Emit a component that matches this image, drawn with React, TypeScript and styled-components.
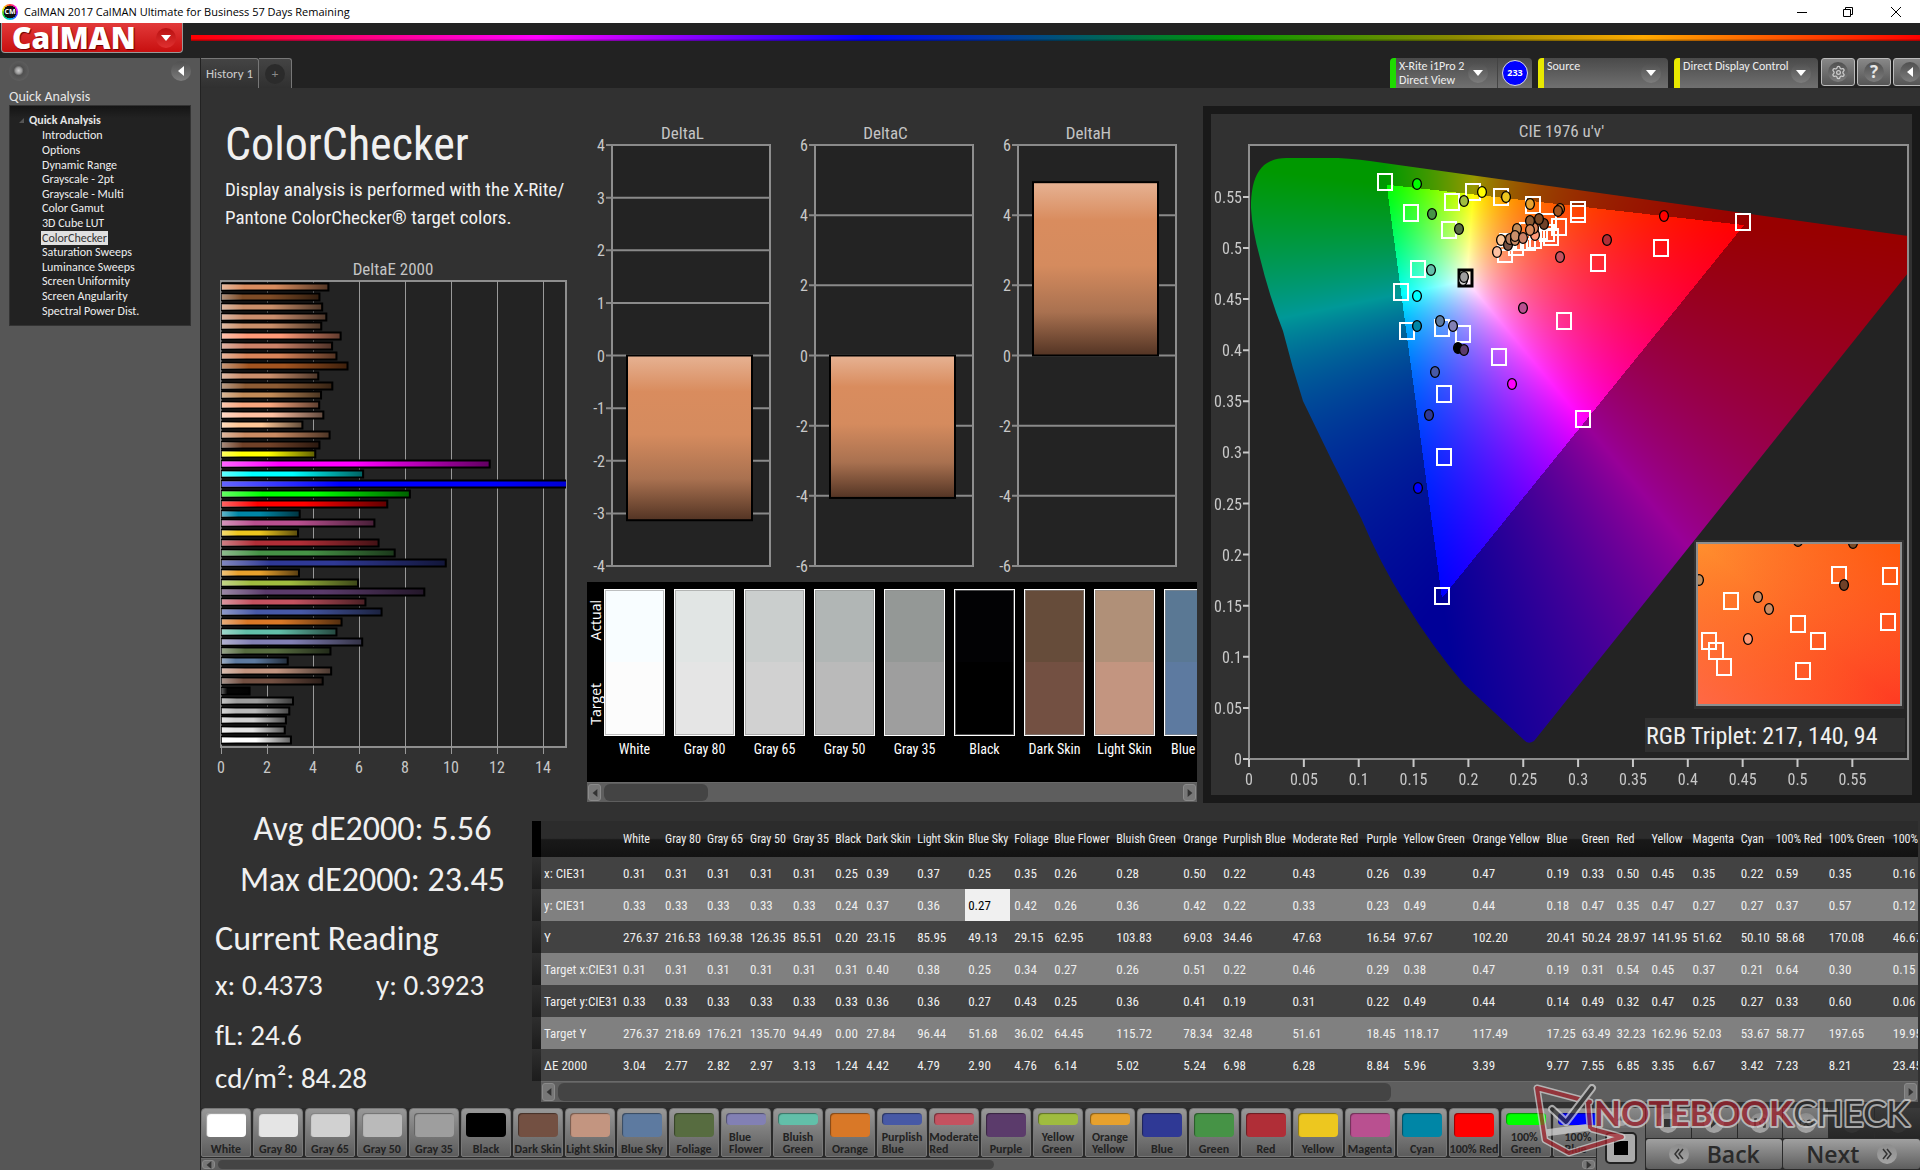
import React, { useEffect, useRef } from 'react';
import styled, { createGlobalStyle, css } from 'styled-components';
import { Settings } from 'lucide-react';

/* ---------- data ---------- */

type Patch = { name: string; color: string };

const patches: Patch[] = [
  { name: 'White', color: '#ffffff' },
  { name: 'Gray 80', color: '#e5e5e5' },
  { name: 'Gray 65', color: '#d1d1d1' },
  { name: 'Gray 50', color: '#bababa' },
  { name: 'Gray 35', color: '#9e9e9e' },
  { name: 'Black', color: '#000000' },
  { name: 'Dark Skin', color: '#735042' },
  { name: 'Light Skin', color: '#c39580' },
  { name: 'Blue Sky', color: '#5d7aa0' },
  { name: 'Foliage', color: '#576c40' },
  { name: 'Blue Flower', color: '#8280b4' },
  { name: 'Bluish Green', color: '#62bfa9' },
  { name: 'Orange', color: '#d97827' },
  { name: 'Purplish Blue', color: '#4759a6' },
  { name: 'Moderate Red', color: '#c45260' },
  { name: 'Purple', color: '#5b3b6b' },
  { name: 'Yellow Green', color: '#9fbc3f' },
  { name: 'Orange Yellow', color: '#e7a12d' },
  { name: 'Blue', color: '#2f3995' },
  { name: 'Green', color: '#469346' },
  { name: 'Red', color: '#b02e37' },
  { name: 'Yellow', color: '#edc71f' },
  { name: 'Magenta', color: '#b95090' },
  { name: 'Cyan', color: '#0086a6' },
  { name: '100% Red', color: '#ff0000' },
  { name: '100% Green', color: '#00ff00' },
  { name: '100% Blue', color: '#0000ff' },
];

const stripPatches = [
  { name: 'White', actual: '#f8fdff', target: '#fcfcfc' },
  { name: 'Gray 80', actual: '#e1e5e4', target: '#e5e5e5' },
  { name: 'Gray 65', actual: '#cacecd', target: '#d1d1d1' },
  { name: 'Gray 50', actual: '#b1b6b5', target: '#bababa' },
  { name: 'Gray 35', actual: '#949896', target: '#9e9e9e' },
  { name: 'Black', actual: '#020204', target: '#000000' },
  { name: 'Dark Skin', actual: '#664c3a', target: '#735042' },
  { name: 'Light Skin', actual: '#b09078', target: '#c39580' },
  { name: 'Blue Sky', actual: '#5a7894', target: '#5d7aa0' },
];

const columnWidths = [
  42, 42, 43, 43, 42, 31, 51, 51, 46, 40, 62, 67, 40, 69, 74, 37, 69, 74, 35, 35, 35, 41, 48, 35, 53, 64, 50,
];

const rows: { label: string; values: string[] }[] = [
  { label: 'x: CIE31', values: '0.31 0.31 0.31 0.31 0.31 0.25 0.39 0.37 0.25 0.35 0.26 0.28 0.50 0.22 0.43 0.26 0.39 0.47 0.19 0.33 0.50 0.45 0.35 0.22 0.59 0.35 0.16'.split(' ') },
  { label: 'y: CIE31', values: '0.33 0.33 0.33 0.33 0.33 0.24 0.37 0.36 0.27 0.42 0.26 0.36 0.42 0.22 0.33 0.23 0.49 0.44 0.18 0.47 0.35 0.47 0.27 0.27 0.37 0.57 0.12'.split(' ') },
  { label: 'Y', values: '276.37 216.53 169.38 126.35 85.51 0.20 23.15 85.95 49.13 29.15 62.95 103.83 69.03 34.46 47.63 16.54 97.67 102.20 20.41 50.24 28.97 141.95 51.62 50.10 58.68 170.08 46.67'.split(' ') },
  { label: 'Target x:CIE31', values: '0.31 0.31 0.31 0.31 0.31 0.31 0.40 0.38 0.25 0.34 0.27 0.26 0.51 0.22 0.46 0.29 0.38 0.47 0.19 0.31 0.54 0.45 0.37 0.21 0.64 0.30 0.15'.split(' ') },
  { label: 'Target y:CIE31', values: '0.33 0.33 0.33 0.33 0.33 0.33 0.36 0.36 0.27 0.43 0.25 0.36 0.41 0.19 0.31 0.22 0.49 0.44 0.14 0.49 0.32 0.47 0.25 0.27 0.33 0.60 0.06'.split(' ') },
  { label: 'Target Y', values: '276.37 218.69 176.21 135.70 94.49 0.00 27.84 96.44 51.68 36.02 64.45 115.72 78.34 32.48 51.61 18.45 118.17 117.49 17.25 63.49 32.23 162.96 52.03 53.67 58.77 197.65 19.95'.split(' ') },
  { label: 'ΔE 2000', values: '3.04 2.77 2.82 2.97 3.13 1.24 4.42 4.79 2.90 4.76 6.14 5.02 5.24 6.98 6.28 8.84 5.96 3.39 9.77 7.55 6.85 3.35 6.67 3.42 7.23 8.21 23.45'.split(' ') },
];

const deltaE: [number, string][] = [
  [4.67, '#d98c5e'], [4.28, '#7d4b26'], [4.4, '#c98e69'], [4.58, '#ca8d6c'], [4.36, '#c98e69'],
  [5.2, '#ff9a78'], [4.83, '#cc8268'], [5.02, '#d98459'], [5.5, '#a25420'], [4.23, '#cb8f6c'],
  [4.84, '#8c5b34'], [4.35, '#c28b58'], [4.27, '#f8a67e'], [4.45, '#ffc1a2'], [3.54, '#ffc797'],
  [4.72, '#ca8b63'], [4.28, '#704128'], [4.1, '#ffff00'], [11.68, '#ff00ff'], [6.18, '#00ffff'],
  [23.45, '#0000ff'], [8.21, '#00ff00'], [7.23, '#ff0000'], [3.42, '#0086a6'], [6.67, '#b95090'],
  [3.35, '#edc71f'], [6.85, '#b02e37'], [7.55, '#469346'], [9.77, '#2f3995'], [3.39, '#e7a12d'],
  [5.96, '#9fbc3f'], [8.84, '#5b3b6b'], [6.28, '#c45260'], [6.98, '#4759a6'], [5.24, '#d97827'],
  [5.02, '#62bfa9'], [6.14, '#8280b4'], [4.76, '#576c40'], [2.9, '#5d7aa0'], [4.79, '#c39580'],
  [4.42, '#735042'], [1.24, '#050505'], [3.13, '#9e9e9e'], [2.97, '#bababa'], [2.82, '#d1d1d1'],
  [2.77, '#e5e5e5'], [3.04, '#ffffff'],
];

const targets: [number, number][] = [
  [136, 37], [224, 47], [252, 52], [203, 57], [162, 68], [200, 85], [284, 60], [329, 65], [329, 69],
  [310, 82], [169, 124], [152, 147], [349, 118], [412, 103], [494, 77], [315, 176], [158, 186],
  [193, 183], [214, 189], [250, 212], [195, 249], [334, 274], [195, 312], [193, 451], [300, 77],
  [302, 92], [285, 95], [279, 97], [274, 97], [267, 102], [256, 109], [258, 97], [278, 86], [291, 86],
  [298, 88],
];

const readings: [number, number, string][] = [
  [168, 39, '#00ff00'], [183, 69, '#469346'], [210, 84, '#576c40'], [215, 56, '#9fbc3f'],
  [233, 47, '#ffff00'], [257, 52, '#edc71f'], [281, 59, '#e7a12d'], [182, 125, '#62bfa9'],
  [168, 151, '#00ffff'], [168, 181, '#0086a6'], [191, 176, '#5d7aa0'], [204, 181, '#8280b4'],
  [209, 203, '#000000'], [215, 205, '#5b3b6b'], [186, 227, '#4759a6'], [180, 270, '#2f3995'],
  [263, 239, '#ff00ff'], [274, 163, '#b95090'], [311, 112, '#c45260'], [358, 95, '#b02e37'],
  [415, 71, '#ff0000'], [214, 135, '#d1d1d1'], [215, 132, '#9e9e9e'], [169, 343, '#0000ff'],
  [248, 107, '#ffc1a2'], [252, 95, '#ffc797'], [259, 100, '#735042'], [261, 94, '#b57d5c'],
  [266, 95, '#ca8b63'], [268, 84, '#c28b58'], [266, 91, '#c98e69'], [274, 93, '#cc8268'],
  [286, 90, '#ff9a78'], [285, 83, '#d98459'], [281, 76, '#8c5b34'], [281, 85, '#d98c5e'],
  [295, 79, '#704128'], [290, 74, '#7d4b26'], [311, 64, '#d97827'], [309, 66, '#a25420'],
];

const insetTargets: [number, number][] = [
  [142, 32], [193, 33], [34, 58], [191, 79], [101, 81], [121, 98], [12, 98], [19, 108], [27, 124], [106, 128],
];

const insetReadings: [number, number, string][] = [
  [2, 37, '#c28b58'], [61, 54, '#ca8b63'], [72, 66, '#cc8b63'], [147, 42, '#704128'],
  [51, 96, '#ff9a78'], [101, -2, '#8c5b34'], [156, 0, '#7d4b26'],
];

const steps = [
  'Introduction', 'Options', 'Dynamic Range', 'Grayscale - 2pt', 'Grayscale - Multi', 'Color Gamut',
  '3D Cube LUT', 'ColorChecker', 'Saturation Sweeps', 'Luminance Sweeps', 'Screen Uniformity',
  'Screen Angularity', 'Spectral Power Dist.',
];

/* ---------- base ---------- */

const humanist = `Carlito, Lato, "Open Sans", sans-serif`;
const condensed = `"Roboto Condensed", Carlito, Roboto, sans-serif`;
const system = `"Open Sans", "Noto Sans", sans-serif`;

const GlobalStyle = createGlobalStyle`
  *, *::before, *::after { box-sizing: border-box; }
  body { margin: 0; background: #222; color: #e6e6e6; font: 12px/15px ${humanist}; overflow: hidden; }
  button, select, input { font: inherit; color: inherit; margin: 0; padding: 0; border: 0; background: none; }
  h1, h2, p, ul, dl, dd, figure { margin: 0; padding: 0; }
  ul { list-style: none; }
`;

const Page = styled.div`
  position: relative;
  display: flex;
  flex-direction: column;
  min-height: 100vh;
  overflow: hidden;
`;

/* ---------- window frame ---------- */

const TitleBar = styled.header`
  display: flex;
  align-items: center;
  gap: 6px;
  height: 23px;
  padding-left: 2px;
  background: #fff;
  color: #000;
  font: 11px/22px ${system};
`;

const AppBadge = styled.span`
  display: grid;
  place-items: center;
  width: 16px;
  height: 16px;
  border-radius: 50%;
  background: radial-gradient(circle, #111 0 56%, transparent 58%),
    conic-gradient(#f33, #f0f, #33f, #0cf, #0c3, #fe0, #f33);
  color: #fff;
  font: 700 7px/16px ${system};
`;

const WindowButtons = styled.div`
  display: flex;
  margin-left: auto;
`;

const WindowButton = styled.button`
  display: grid;
  place-items: center;
  width: 46px;
  height: 21px;

  &:last-child { width: 49px; }
`;

const Brand = styled.div`
  display: flex;
  align-items: flex-start;
  gap: 8px;
  height: 35px;
  padding-left: 1px;
`;

const BrandButton = styled.button`
  display: flex;
  align-items: center;
  justify-content: space-between;
  width: 182px;
  height: 30px;
  padding: 0 6px 0 10px;
  border: 1px solid #999;
  border-top: 0;
  border-radius: 0 0 4px 4px;
  background: linear-gradient(#e23a3a, #c80f0f);
  color: #fff;
  font: 800 30px/28px ${system};
  text-shadow: 1px 1px 1px #600;
`;

const Rainbow = styled.div`
  flex: 1;
  height: 6px;
  margin-top: 12px;
  background: linear-gradient(#0000 60%, #0006),
    linear-gradient(90deg, #f00, #f0f 20%, #00f 39%, #090 60%, #8a8a00 73%, #fa0 84%, #f00);
`;

const Round = styled.span<{ $size?: number; $tone?: string }>`
  display: inline-grid;
  place-items: center;
  flex: none;
  width: ${(p) => p.$size ?? 20}px;
  height: ${(p) => p.$size ?? 20}px;
  border-radius: 50%;
  background: ${(p) => p.$tone ?? 'linear-gradient(#505050, #7c7c7c)'};
`;

const Body = styled.div`
  display: flex;
  flex: 1;
`;

/* ---------- sidebar ---------- */

const Sidebar = styled.nav`
  flex: none;
  width: 201px;
  padding: 3px 9px;
  border-right: 1px solid #222;
  background: #565656;
`;

const SidebarTools = styled.div`
  display: flex;
  justify-content: space-between;
  height: 28px;
`;

const PlainButton = styled.button`
  display: grid;
  place-items: center;
  width: 20px;
  height: 20px;
`;

const SidebarTitle = styled.h2`
  font: 14px/16px ${humanist};
`;

const Tree = styled.div`
  height: 221px;
  padding: 6px 0 0 14px;
  border: 1px solid #333;
  background: linear-gradient(#151515, #222 12px);
`;

const TreeRoot = styled.div`
  display: flex;
  align-items: center;
  gap: 5px;
  height: 16px;
  margin-left: -5px;
  font-weight: 700;
`;

const TreeList = styled.ul`
  display: flex;
  flex-direction: column;
  height: 190px;
  margin-left: 17px;
`;

const TreeItem = styled.li`
  display: flex;
  flex: 1;
  align-items: center;
`;

const TreeLink = styled.a<{ $active?: boolean }>`
  padding: 0 1px;
  line-height: 14px;
  color: ${(p) => (p.$active ? '#333' : '#eee')};
  background: ${(p) => (p.$active ? '#e0e0e0' : 'none')};
  text-decoration: none;
`;

/* ---------- tab and device bar ---------- */

const Main = styled.main`
  display: flex;
  flex: 1;
  flex-direction: column;
  min-width: 0;
  background: #313131;
`;

const TopBar = styled.div`
  display: flex;
  align-items: flex-start;
  justify-content: space-between;
  height: 30px;
  background: #222;
`;

const Tabs = styled.div`
  display: flex;
`;

const Tab = styled.button<{ $width: number }>`
  width: ${(p) => p.$width}px;
  height: 30px;
  border: 1px solid #777;
  border-bottom: 0;
  border-left-width: 0;
  border-radius: 0 3px 0 0;
  background: linear-gradient(#444, #303030);
  color: #ccc;
  font-size: 13px;
`;

const TabPlus = styled(Round)`
  color: #888;
`;

const Devices = styled.div`
  display: flex;
  align-items: flex-start;
  gap: 6px;
`;

const deviceFace = css`
  height: 30px;
  border-radius: 4px 4px 0 0;
  background: linear-gradient(#4a4a4a, #707070);
  color: #eee;
`;

const Meter = styled.div`
  ${deviceFace}
  display: flex;
  align-items: center;
  width: 142px;
  border-left: 6px solid #1edc00;
`;

const MeterButton = styled.button`
  display: flex;
  align-items: center;
  justify-content: space-between;
  width: 102px;
  height: 30px;
  padding: 0 9px 0 3px;
  border-right: 1px solid #444;
  line-height: 14px;
  text-align: left;
`;

const Count = styled.span`
  display: grid;
  place-items: center;
  width: 26px;
  height: 26px;
  margin: 0 auto;
  border: 1px solid #ddd;
  border-radius: 50%;
  background: #00f;
  color: #fff;
  font: 700 9px/12px ${system};
`;

const DeviceSelect = styled.label<{ $width: number }>`
  ${deviceFace}
  display: grid;
  grid-template-columns: 1fr 27px;
  align-items: center;
  width: ${(p) => p.$width}px;
  border-left: 6px solid #e8e800;
`;

const Select = styled.select`
  grid-area: 1 / 1 / 2 / 3;
  width: 100%;
  height: 30px;
  padding: 0 0 13px 3px;
  appearance: none;
  outline: 0;
`;

const SelectArrow = styled(Round)`
  grid-area: 1 / 2;
  pointer-events: none;
`;

const SquareButtons = styled.div`
  display: flex;
  gap: 2px;
  width: 99px;
  margin-left: -3px;
  overflow: hidden;
`;

const SquareButton = styled.button`
  display: grid;
  flex: none;
  place-items: center;
  width: 34px;
  height: 28px;
  border: 1px solid #bbb;
  border-radius: 3px;
  background: linear-gradient(#888, #555);
  font: 700 17px/20px ${system};
`;

/* ---------- workspace ---------- */

const Workspace = styled.div`
  display: grid;
  grid-template-columns: 380px 622px minmax(0, 1fr);
  height: 715px;
`;

const Intro = styled.section`
  padding-top: 26px;
`;

const Title = styled.h1`
  padding-left: 24px;
  color: #f0f0f0;
  font: 400 46px/60px ${condensed};
`;

const Lead = styled.p`
  padding: 2px 0 25px 24px;
  color: #f0f0f0;
  font: 19px/28px ${condensed};
`;

const Caption = styled.figcaption`
  height: 24px;
  color: #c4c4c4;
  font: 17px/24px ${condensed};
  text-align: center;
`;

const WideCaption = styled(Caption)`
  padding-left: 4px;
`;

const Drawing = styled.svg`
  display: block;
  overflow: visible;
`;

const AxisText = styled.text`
  fill: #c8c8c8;
  font: 16px ${condensed};
`;

const Middle = styled.section`
  padding-top: 33px;
`;

const DeltaRow = styled.div`
  display: flex;
  width: 609px;
  margin-bottom: 16px;
`;

const Delta = styled.figure`
  flex: 1;
`;

const Strip = styled.div`
  width: 610px;
  margin-left: 6px;
`;

const StripBody = styled.div`
  display: flex;
  height: 200px;
  padding-top: 7px;
  background: #000;
  overflow: hidden;
`;

const StripSide = styled.div`
  display: flex;
  flex: none;
  flex-direction: column;
  justify-content: space-between;
  width: 17px;
  height: 147px;
  padding: 11px 0;
`;

const SideLabel = styled.span`
  writing-mode: vertical-rl;
  transform: rotate(180deg);
  color: #fff;
  font: 14px/17px ${system};
`;

const StripItems = styled.div`
  display: flex;
  gap: 9px;
`;

const StripItem = styled.div`
  flex: none;
  width: 61px;
  color: #fff;
  font: 14px/26px ${condensed};
  text-align: center;
  white-space: nowrap;
`;

const StripSwatch = styled.div<{ $top: string; $bottom: string }>`
  height: 147px;
  border: 1px solid #fff;
  box-shadow: inset 0 0 0 1px #8888;
  background: linear-gradient(${(p) => p.$top} 50%, ${(p) => p.$bottom} 50%);
`;

const ScrollTrack = styled.div<{ $height: number }>`
  display: flex;
  align-items: center;
  height: ${(p) => p.$height}px;
  padding: 1px;
  gap: 3px;
  border-top: 1px solid #6a6a6a;
  background: #5e5e5e;
`;

const ScrollButton = styled.button`
  display: grid;
  place-items: center;
  flex: none;
  align-self: stretch;
  width: 13px;
  border: 1px solid #8a8a8a;
  border-radius: 3px;
  background: #777;
`;

const ScrollLane = styled.div`
  display: flex;
  flex: 1;
  align-self: stretch;
`;

const ScrollThumb = styled.div<{ $percent: number }>`
  width: ${(p) => p.$percent}%;
  border-radius: 6px;
  background: #444;
`;

const CiePanel = styled.section`
  margin-top: 18px;
  border: 8px solid #191919;
`;

const CieCaption = styled(Caption)`
  height: 31px;
  line-height: 34px;
`;

const PanelText = styled.text`
  fill: #f0f0f0;
  font: 24px ${condensed};
`;

/* ---------- results ---------- */

const Results = styled.div`
  display: grid;
  grid-template-columns: 331px minmax(0, 1fr);
  height: 305px;
`;

const Stats = styled.section`
  padding-left: 14px;
  color: #f0f0f0;
`;

const BigStat = styled.p`
  padding-right: 2px;
  font: 34px/51px ${humanist};
  text-align: center;
`;

const StatTitle = styled.h2`
  padding-top: 9px;
  font: 400 34px/50px ${humanist};
`;

const StatRow = styled.p<{ $spaced?: boolean }>`
  display: grid;
  grid-template-columns: 161px 1fr;
  padding-bottom: ${(p) => (p.$spaced ? 7 : 0)}px;
  font: 29px/43px ${humanist};
`;

const TableArea = styled.section`
  display: grid;
  grid-template-columns: 9px minmax(0, 1fr);
  align-content: start;
  margin: 18px 2px 0 0;
`;

const RowHandles = styled.div`
  border-top: 36px solid #000;
  background: repeating-linear-gradient(#2e2e2e, #1c1c1c 32px);
`;

const TableClip = styled.div`
  overflow: hidden;
`;

const Table = styled.table`
  width: 1399px;
  table-layout: fixed;
  border-collapse: collapse;
  color: #eee;
  font: 13px/20px ${condensed};
  text-align: left;
  white-space: nowrap;

  thead tr { height: 36px; background: linear-gradient(#2c2c2c 48%, #191919 52%, #121212); }
  tbody tr { height: 32px; background: #424242; }
  tbody tr:nth-child(even) { background: #808080; }
  th, td { padding: 2px 0 0 3px; font-weight: 400; }
  thead th { padding-top: 0; font-size: 12px; }
`;

const EditTd = styled.td`
  && { padding: 0; }
`;

const EditCell = styled.input`
  display: block;
  width: 45px;
  height: 32px;
  padding-left: 3px;
  background: #f0f0f0;
  color: #000;
`;

const TableScroll = styled.div`
  grid-column: 2;
`;

/* ---------- bottom bar ---------- */

const BottomBar = styled.footer`
  display: grid;
  grid-template-columns: minmax(0, 1fr) 48px 274px;
  gap: 1px;
  height: 62px;
  background: #2a2a2a;
`;

const Palette = styled.div`
  min-width: 0;
`;

const PaletteItems = styled.div`
  display: flex;
  gap: 2px;
  height: 50px;
  overflow: hidden;
`;

const PaletteButton = styled.button`
  display: flex;
  flex: none;
  flex-direction: column;
  align-items: center;
  justify-content: space-between;
  width: 50px;
  height: 49px;
  padding: 4px 0 1px;
  border: 1px solid #777;
  border-radius: 4px 4px 2px 2px;
  background: linear-gradient(#989898, #5c5c5c);
  color: #222;
  font: 700 12px/12px ${humanist};
  text-align: left;
  white-space: nowrap;
`;

const PaletteSwatch = styled.span<{ $color: string; $short: boolean }>`
  width: 40px;
  height: ${(p) => (p.$short ? 12 : 24)}px;
  border-radius: 4px;
  background: ${(p) => p.$color};
  box-shadow: inset 1px 1px 1px #0006;
`;

const StopColumn = styled.div`
  display: flex;
  flex-direction: column;
  align-items: center;
  background: #666;
`;

const UpButton = styled.button`
  display: grid;
  place-items: center;
  width: 48px;
  height: 20px;
  background: linear-gradient(#8a8a8a, #6c6c6c);
`;

const PatternButton = styled.button`
  display: grid;
  place-items: center;
  width: 32px;
  height: 32px;
  margin-top: 4px;
  border: 2px solid #222;
  border-radius: 5px;
  background: #aaa;
`;

const PatternSquare = styled.span`
  width: 14px;
  height: 14px;
  background: #000;
`;

const Transport = styled.div`
  display: grid;
  grid-template-columns: repeat(6, 1fr);
  grid-template-rows: 30px 30px;
  gap: 1px;
`;

const TransportButton = styled.button<{ $off?: boolean }>`
  display: grid;
  place-items: center;
  background: ${(p) => (p.$off ? 'linear-gradient(#3a3a3a, #262626)' : 'linear-gradient(#7d7d7d, #585858)')};
`;

const StepButton = styled.button`
  display: flex;
  grid-column: span 3;
  align-items: center;
  justify-content: center;
  gap: 18px;
  border-radius: 3px;
  background: linear-gradient(#a0a0a0, #5e5e5e);
  color: #2a2a2a;
  font: 600 23px/28px ${system};
`;

const Watermark = styled.svg`
  position: absolute;
  right: 0;
  bottom: 0;
  overflow: visible;
  pointer-events: none;
`;

const WatermarkText = styled.text`
  font: 700 35px Lato, sans-serif;
  stroke: #d4d4d4;
  stroke-width: 4px;
  stroke-linejoin: round;
  paint-order: stroke;
`;

/* ---------- pieces ---------- */

type Direction = 'left' | 'right' | 'down' | 'up';

const arrowPaths: Record<Direction, string> = {
  left: 'M8 0 L2 5 L8 10 Z',
  right: 'M2 0 L8 5 L2 10 Z',
  down: 'M0 2 L10 2 L5 8 Z',
  up: 'M0 8 L10 8 L5 2 Z',
};

function Arrow({ to, size = 10, fill = '#fff' }: { to: Direction; size?: number; fill?: string }) {
  return (
    <svg width={size} height={size} viewBox="0 0 10 10" aria-hidden="true">
      <path d={arrowPaths[to]} fill={fill} />
    </svg>
  );
}

function ScrollBar({ height, percent }: { height: number; percent: number }) {
  return (
    <ScrollTrack $height={height}>
      <ScrollButton aria-label="Scroll left"><Arrow to="left" size={8} fill="#333" /></ScrollButton>
      <ScrollLane><ScrollThumb $percent={percent} /></ScrollLane>
      <ScrollButton aria-label="Scroll right"><Arrow to="right" size={8} fill="#333" /></ScrollButton>
    </ScrollTrack>
  );
}

function DeltaEChart() {
  const left = 20;
  const unit = 23;
  const width = 345;
  const height = 466;
  const pitch = 9.85;
  return (
    <figure>
      <WideCaption>DeltaE 2000</WideCaption>
      <Drawing width="380" height="500" viewBox="0 0 380 500">
        <defs>
          <linearGradient id="sheen">
            <stop offset="0" stopColor="#fff" stopOpacity=".4" />
            <stop offset=".22" stopColor="#fff" stopOpacity="0" />
            <stop offset=".5" stopColor="#000" stopOpacity="0" />
            <stop offset="1" stopColor="#000" stopOpacity=".62" />
          </linearGradient>
          <clipPath id="plotE"><rect x={left} y="0" width={width} height={height} /></clipPath>
        </defs>
        <rect x={left} y="0" width={width} height={height} fill="#232323" stroke="#8e8e8e" strokeWidth="2" />
        {[0, 2, 4, 6, 8, 10, 12, 14].map((n) => (
          <g key={n}>
            <path d={`M${left + n * unit + 0.5} 0 V${height + 7}`} stroke="#999" />
            <AxisText x={left + n * unit} y="492" textAnchor="middle">{n}</AxisText>
          </g>
        ))}
        <g clipPath="url(#plotE)">
          {deltaE.map(([value, color], i) => (
            <g key={i} stroke="#000">
              <rect x={left} y={Math.round(3 + i * pitch) - 0.5} width={value * unit} height="7" fill={color} strokeWidth="2" />
              <rect x={left} y={Math.round(3 + i * pitch) - 0.5} width={value * unit} height="7" fill="url(#sheen)" />
            </g>
          ))}
        </g>
      </Drawing>
    </figure>
  );
}

function DeltaChart({ name, range, step, value }: { name: string; range: number; step: number; value: number }) {
  const height = 421;
  const unit = height / (range * 2);
  const ticks: number[] = [];
  for (let n = range; n >= -range; n -= step) ticks.push(n);
  const top = value > 0 ? (range - value) * unit : range * unit;
  return (
    <Delta>
      <Caption>{name}</Caption>
      <Drawing width="203" height="421" viewBox="0 0 203 421">
        <defs>
          <linearGradient id="skin" x2="0" y2="1">
            <stop offset="0" stopColor="#e6b293" />
            <stop offset=".22" stopColor="#d98c5e" />
            <stop offset=".48" stopColor="#d58b5e" />
            <stop offset=".75" stopColor="#a97150" />
            <stop offset="1" stopColor="#533424" />
          </linearGradient>
        </defs>
        <rect x="31" y="0" width="158" height={height} fill="#232323" stroke="#8e8e8e" strokeWidth="2" />
        {ticks.map((n) => (
          <g key={n}>
            <path d={`M25 ${(range - n) * unit} H189`} stroke="#8a8a8a" strokeWidth="2" />
            <AxisText x="24" y={(range - n) * unit + 6} textAnchor="end">{n}</AxisText>
          </g>
        ))}
        <rect x="46" y={top} width="125" height={Math.abs(value) * unit} fill="url(#skin)" stroke="#000" strokeWidth="2" />
      </Drawing>
    </Delta>
  );
}

const PLOT_W = 659;
const PLOT_H = 614;
const locus =
  'M2 63 C2 30 12 13 38 13 L89 13 Q110 14 135 18 L659 91 V128 L285 596 Q279 600 275 595 L215 539 Q184 503 155 456 Q132 420 112 373 Q82 315 54 256 Q43 222 34 186 Q20 150 11 113 Q3 84 2 63 Z';

function ChromaticityField() {
  const ref = useRef<HTMLCanvasElement>(null);
  useEffect(() => {
    const canvas = ref.current;
    const ctx = canvas?.getContext('2d');
    if (!ctx) return;
    const image = ctx.createImageData(PLOT_W, PLOT_H);
    for (let py = 0; py < PLOT_H; py++) {
      for (let px = 0; px < PLOT_W; px++) {
        const u = px / 1097;
        const v = Math.max((PLOT_H - py) / 1022, 0.005);
        // u'v' at unit luminance to XYZ, then to linear sRGB
        const X = (9 * u) / (4 * v);
        const Z = (12 - 3 * u - 20 * v) / (4 * v);
        const r = 3.2406 * X - 1.5372 - 0.4986 * Z;
        const g = -0.9689 * X + 1.8758 + 0.0415 * Z;
        const b = 0.0557 * X - 0.204 + 1.057 * Z;
        const peak = Math.max(r, g, b, 0.0001);
        const gain = Math.min(r, g, b) < 0 ? 152 : 255;
        const i = (py * PLOT_W + px) * 4;
        image.data[i] = (Math.max(r, 0) / peak) * gain;
        image.data[i + 1] = (Math.max(g, 0) / peak) * gain;
        image.data[i + 2] = (Math.max(b, 0) / peak) * gain;
        image.data[i + 3] = 255;
      }
    }
    ctx.putImageData(image, 0, 0);
    ctx.globalCompositeOperation = 'destination-in';
    ctx.fill(new Path2D(locus));
    ctx.globalCompositeOperation = 'destination-over';
    ctx.fillStyle = '#232323';
    ctx.fillRect(0, 0, PLOT_W, PLOT_H);
    ctx.globalCompositeOperation = 'source-over';
  }, []);
  return <canvas ref={ref} width={PLOT_W} height={PLOT_H} />;
}

function Targets({ points }: { points: [number, number][] }) {
  return (
    <g fill="none" stroke="#fff" strokeWidth="2">
      {points.map(([x, y], i) => <rect key={i} x={x - 7} y={y - 8} width="14" height="16" />)}
    </g>
  );
}

function Readings({ points }: { points: [number, number, string][] }) {
  return (
    <g stroke="#000" strokeWidth="1.3">
      {points.map(([x, y, c], i) => <ellipse key={i} cx={x} cy={y} rx="4.4" ry="5.4" fill={c} />)}
    </g>
  );
}

function CieChart() {
  const ticks = [0, 0.05, 0.1, 0.15, 0.2, 0.25, 0.3, 0.35, 0.4, 0.45, 0.5, 0.55];
  return (
    <figure>
      <CieCaption>CIE 1976 u'v'</CieCaption>
      <Drawing width="100%" viewBox="0 0 701 650">
        <defs>
          <linearGradient id="insetBase" x2="1" y2="1">
            <stop offset="0" stopColor="#ff8f2e" />
            <stop offset=".5" stopColor="#ff6426" />
            <stop offset="1" stopColor="#ff3a22" />
          </linearGradient>
          <linearGradient id="insetTint" x1="1" y1="0" x2="0" y2="1">
            <stop offset="0" stopColor="#ff5400" stopOpacity=".7" />
            <stop offset=".5" stopColor="#ff6426" stopOpacity="0" />
            <stop offset="1" stopColor="#ff6a55" stopOpacity=".7" />
          </linearGradient>
          <clipPath id="insetClip"><rect width="204" height="162" /></clipPath>
        </defs>
        <g transform="translate(38 0)">
          <foreignObject width={PLOT_W} height={PLOT_H}><ChromaticityField /></foreignObject>
          <rect width={PLOT_W} height={PLOT_H} fill="none" stroke="#8e8e8e" strokeWidth="2" />
          {ticks.map((n) => (
            <g key={n}>
              <path d={`M-6 ${PLOT_H - n * 1022} H0 M${n * 1097} ${PLOT_H} V${PLOT_H + 8}`} stroke="#c8c8c8" strokeWidth="2" />
              <AxisText x="-7" y={PLOT_H - n * 1022 + 6} textAnchor="end">{n}</AxisText>
              <AxisText x={n * 1097} y="640" textAnchor="middle">{n}</AxisText>
            </g>
          ))}
          <Targets points={targets} />
          <rect x="210" y="125" width="13" height="16" fill="none" stroke="#000" strokeWidth="3" />
          <Readings points={readings} />
          <g transform="translate(448 398)">
            <rect x="-3" y="-3" width="210" height="169" fill="#303030" />
            <g clipPath="url(#insetClip)">
              <rect width="204" height="162" fill="url(#insetBase)" />
              <rect width="204" height="162" fill="url(#insetTint)" />
              <Targets points={insetTargets} />
              <Readings points={insetReadings} />
            </g>
            <rect width="204" height="162" fill="none" stroke="#8e8e8e" strokeWidth="2" />
          </g>
          <rect x="396" y="573" width="260" height="34" fill="#303030" />
          <PanelText x="397" y="599">RGB Triplet: 217, 140, 94</PanelText>
        </g>
      </Drawing>
    </figure>
  );
}

function ResultTable() {
  return (
    <Table>
      <colgroup>
        <col width={79} />
        {columnWidths.map((w, i) => <col key={i} width={w} />)}
      </colgroup>
      <thead>
        <tr>
          <th aria-label="Measurement" />
          {patches.map((p) => <th key={p.name} scope="col">{p.name}</th>)}
        </tr>
      </thead>
      <tbody>
        {rows.map((row, r) => (
          <tr key={row.label}>
            <th scope="row">{row.label}</th>
            {row.values.map((value, c) =>
              r === 1 && c === 8 ? (
                <EditTd key={c}><EditCell aria-label="y: CIE31, Blue Sky" defaultValue={value} /></EditTd>
              ) : (
                <td key={c}>{value}</td>
              ),
            )}
          </tr>
        ))}
      </tbody>
    </Table>
  );
}

const iconDisc = 'linear-gradient(#8c8c8c, #a4a4a4)';
const stackedNames = [
  'Blue Flower', 'Bluish Green', 'Purplish Blue', 'Moderate Red', 'Yellow Green', 'Orange Yellow',
  '100% Green', '100% Blue',
];

export default function App() {
  return (
    <Page>
      <GlobalStyle />
      <TitleBar>
        <AppBadge>CM</AppBadge>
        CalMAN 2017 CalMAN Ultimate for Business 57 Days Remaining
        <WindowButtons>
          <WindowButton aria-label="Minimize">
            <svg width="10" height="10"><path d="M0 5.5H10" stroke="#000" /></svg>
          </WindowButton>
          <WindowButton aria-label="Restore">
            <svg width="10" height="10" fill="none" stroke="#000"><path d="M.5 2.5h7v7h-7zM2.5 2.5v-2h7v7h-2" /></svg>
          </WindowButton>
          <WindowButton aria-label="Close">
            <svg width="10" height="10" stroke="#000"><path d="M0 0L10 10M10 0L0 10" /></svg>
          </WindowButton>
        </WindowButtons>
      </TitleBar>
      <Brand>
        <BrandButton>
          CalMAN
          <Round $tone="linear-gradient(#b81010, #e03030)"><Arrow to="down" /></Round>
        </BrandButton>
        <Rainbow />
      </Brand>
      <Body>
        <Sidebar>
          <SidebarTools>
            <PlainButton aria-label="Pin panel">
              <Round $tone="radial-gradient(circle at 48% 48%, #ccc 0, #999 3px, #505050 5px, #6a6a6a)" />
            </PlainButton>
            <PlainButton aria-label="Collapse panel">
              <Round><Arrow to="left" /></Round>
            </PlainButton>
          </SidebarTools>
          <SidebarTitle>Quick Analysis</SidebarTitle>
          <Tree>
            <TreeRoot>
              <svg width="5" height="5" aria-hidden="true"><path d="M5 0V5H0Z" fill="#555" /></svg>
              Quick Analysis
            </TreeRoot>
            <TreeList>
              {steps.map((s) => (
                <TreeItem key={s}><TreeLink href="#" $active={s === 'ColorChecker'}>{s}</TreeLink></TreeItem>
              ))}
            </TreeList>
          </Tree>
        </Sidebar>
        <Main>
          <TopBar>
            <Tabs>
              <Tab $width={58}>History 1</Tab>
              <Tab $width={33} aria-label="Add tab"><TabPlus $tone="#2b2b2b">+</TabPlus></Tab>
            </Tabs>
            <Devices>
              <Meter>
                <MeterButton>
                  <span>X-Rite i1Pro 2<br />Direct View</span>
                  <Round><Arrow to="down" /></Round>
                </MeterButton>
                <Count>233</Count>
              </Meter>
              <DeviceSelect $width={130}>
                <Select aria-label="Source"><option>Source</option></Select>
                <SelectArrow><Arrow to="down" /></SelectArrow>
              </DeviceSelect>
              <DeviceSelect $width={144}>
                <Select aria-label="Display control"><option>Direct Display Control</option></Select>
                <SelectArrow><Arrow to="down" /></SelectArrow>
              </DeviceSelect>
              <SquareButtons>
                <SquareButton aria-label="Settings"><Round><Settings size={15} color="#ccc" /></Round></SquareButton>
                <SquareButton aria-label="Help"><Round>?</Round></SquareButton>
                <SquareButton aria-label="Collapse"><Round><Arrow to="left" /></Round></SquareButton>
              </SquareButtons>
            </Devices>
          </TopBar>
          <Workspace>
            <Intro>
              <Title>ColorChecker</Title>
              <Lead>
                Display analysis is performed with the X-Rite/<br />Pantone ColorChecker® target colors.
              </Lead>
              <DeltaEChart />
            </Intro>
            <Middle>
              <DeltaRow>
                <DeltaChart name="DeltaL" range={4} step={1} value={-3.13} />
                <DeltaChart name="DeltaC" range={6} step={2} value={-4.06} />
                <DeltaChart name="DeltaH" range={6} step={2} value={4.94} />
              </DeltaRow>
              <Strip>
                <StripBody>
                  <StripSide>
                    <SideLabel>Actual</SideLabel>
                    <SideLabel>Target</SideLabel>
                  </StripSide>
                  <StripItems>
                    {stripPatches.map((p) => (
                      <StripItem key={p.name}>
                        <StripSwatch $top={p.actual} $bottom={p.target} />
                        {p.name}
                      </StripItem>
                    ))}
                  </StripItems>
                </StripBody>
                <ScrollBar height={20} percent={18} />
              </Strip>
            </Middle>
            <CiePanel><CieChart /></CiePanel>
          </Workspace>
          <Results>
            <Stats>
              <BigStat>Avg dE2000: 5.56</BigStat>
              <BigStat>Max dE2000: 23.45</BigStat>
              <StatTitle>Current Reading</StatTitle>
              <StatRow $spaced><span>x: 0.4373</span><span>y: 0.3923</span></StatRow>
              <StatRow>fL: 24.6</StatRow>
              <StatRow>cd/m²: 84.28</StatRow>
            </Stats>
            <TableArea>
              <RowHandles />
              <TableClip><ResultTable /></TableClip>
              <TableScroll><ScrollBar height={21} percent={62} /></TableScroll>
            </TableArea>
          </Results>
          <BottomBar>
            <Palette>
              <PaletteItems>
                {patches.map((p) => {
                  const stacked = stackedNames.includes(p.name);
                  const [first, second] = p.name.split(' ');
                  return (
                    <PaletteButton key={p.name}>
                      <PaletteSwatch $color={p.color} $short={stacked} />
                      <span>{stacked ? <>{first}<br />{second}</> : p.name}</span>
                    </PaletteButton>
                  );
                })}
              </PaletteItems>
              <ScrollBar height={12} percent={57} />
            </Palette>
            <StopColumn>
              <UpButton aria-label="Expand"><Round $size={16} $tone={iconDisc}><Arrow to="up" size={8} fill="#444" /></Round></UpButton>
              <PatternButton aria-label="Pattern window"><PatternSquare /></PatternButton>
            </StopColumn>
            <Transport>
              <TransportButton aria-label="Stop">
                <Round $tone={iconDisc}><svg width="8" height="8"><rect width="8" height="8" fill="#333" /></svg></Round>
              </TransportButton>
              <TransportButton aria-label="Play"><Round $tone={iconDisc}><Arrow to="right" fill="#333" /></Round></TransportButton>
              <TransportButton aria-label="Read series">
                <Round $tone={iconDisc}>
                  <svg width="12" height="10" fill="none" stroke="#333" strokeWidth="1.5"><path d="M3 1H1V9H3M9 1H11V9H9M5 5H7" /></svg>
                </Round>
              </TransportButton>
              <TransportButton aria-label="Read continuously">
                <Round $tone={iconDisc}>
                  <svg width="14" height="8" fill="none" stroke="#333" strokeWidth="1.5"><path d="M7 4C5 0 1 1 1 4S5 8 7 4 13 1 13 4 9 8 7 4Z" /></svg>
                </Round>
              </TransportButton>
              <TransportButton $off aria-label="Refresh"><Round $tone="#333" /></TransportButton>
              <TransportButton $off aria-label="Record"><Round $tone="#333" /></TransportButton>
              <StepButton>
                <Round $tone={iconDisc}>
                  <svg width="10" height="12" fill="none" stroke="#333" strokeWidth="1.5"><path d="M5 1L1 6L5 11M9 1L5 6L9 11" /></svg>
                </Round>
                Back
              </StepButton>
              <StepButton>
                Next
                <Round $tone={iconDisc}>
                  <svg width="10" height="12" fill="none" stroke="#333" strokeWidth="1.5"><path d="M1 1L5 6L1 11M5 1L9 6L5 11" /></svg>
                </Round>
              </StepButton>
            </Transport>
          </BottomBar>
        </Main>
      </Body>
      <Watermark width="380" height="90" opacity="0.72" aria-hidden="true">
        <g fill="none" strokeLinejoin="round" strokeLinecap="round">
          <path d="M50 22L-3 8L5 60L29 73L82 57L52 49M48 22L50 47L5 53" stroke="#d4d4d4" strokeWidth="7" />
          <path d="M50 22L-3 8L5 60L29 73L82 57L52 49M48 22L50 47" stroke="#a8262f" strokeWidth="4" />
          <path d="M12 29L26 42L52 8" stroke="#d4d4d4" strokeWidth="8" />
          <path d="M12 29L26 42L52 8" stroke="#333" strokeWidth="4" />
        </g>
        <WatermarkText x="54" y="46" fill="#a0202c">
          NOTEBOOK<tspan fill="#2a2a2a" fontWeight="400">CHECK</tspan>
        </WatermarkText>
      </Watermark>
    </Page>
  );
}
